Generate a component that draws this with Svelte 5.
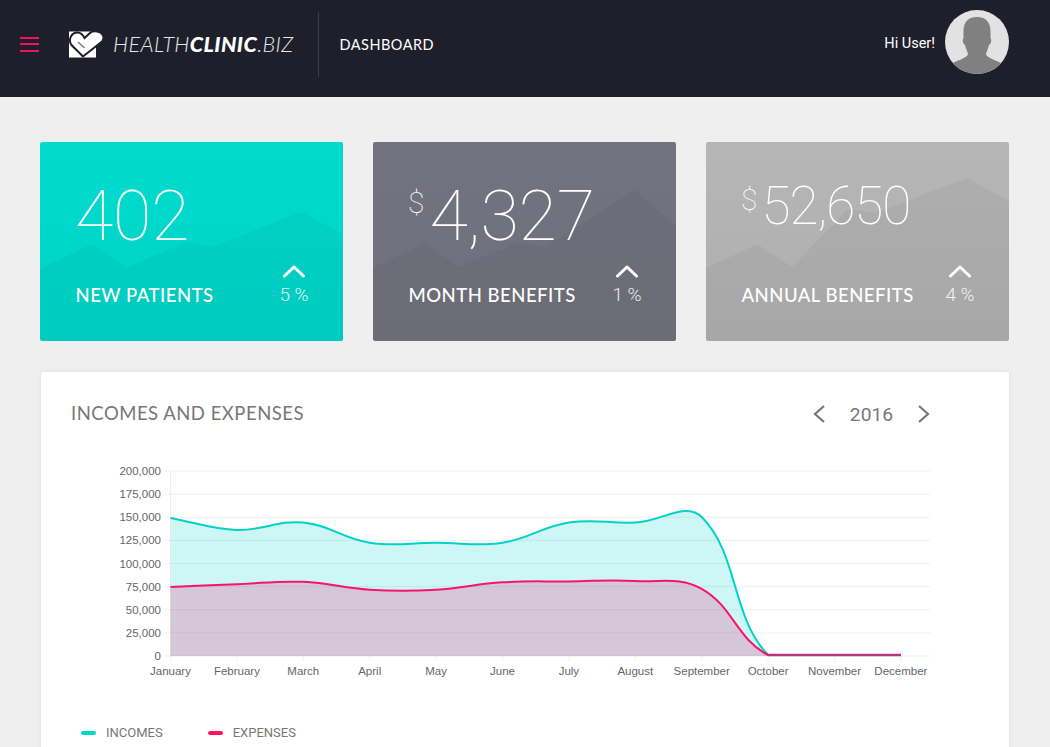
<script>
  const cards = [
    { cls: 'teal', prefix: '', value: '402', label: 'NEW PATIENTS', pct: '5', small: false,
      pts: '0,127 51,102 87,125 147,100 172,105 261,70 303,92 303,199 0,199' },
    { cls: 'slate', prefix: '$', value: '4,327', label: 'MONTH BENEFITS', pct: '1', small: false,
      pts: '0,126 52,101 86,125 145,100 172,105 262,48 303,84 303,199 0,199' },
    { cls: 'gray', prefix: '$', value: '52,650', label: 'ANNUAL BENEFITS', pct: '4', small: true,
      pts: '0,126 51,102 86,125 142,67 169,71 261,36 303,59 303,199 0,199' }
  ];

  const months = ['January','February','March','April','May','June','July','August','September','October','November','December'];
  const ticks = ['200,000','175,000','150,000','125,000','100,000','75,000','50,000','25,000','0'];
  const X0 = 89.5, STEP = 66.4, TOP = 13, BOTTOM = 198;
  const xs = months.map((_, i) => X0 + i * STEP);
  const rowH = (BOTTOM - TOP) / 8;

  const val = (v) => BOTTOM - 1 - (v / 200000) * (BOTTOM - TOP - 1);
  const incomes = [149000, 136000, 144000, 122000, 122000, 122000, 144000, 144000, 150000, 0, 0, 0];
  const expenses = [74000, 77000, 79500, 71000, 71000, 79000, 80000, 80500, 72000, 0, 0, 0];

  function spline(data) {
    const p = data.map((v, i) => [xs[i], val(v)]);
    const cap = (y) => Math.min(BOTTOM - 1, Math.max(TOP, y));
    let d = `M${p[0][0]} ${p[0][1]}`;
    const ctrl = (i) => {
      const a = p[Math.max(0, i - 1)], b = p[i], c = p[Math.min(p.length - 1, i + 1)];
      const d1 = Math.hypot(b[0] - a[0], b[1] - a[1]), d2 = Math.hypot(c[0] - b[0], c[1] - b[1]);
      const s = d1 + d2 || 1, t = 0.4;
      return {
        prev: [b[0] - (t * d1 / s) * (c[0] - a[0]), cap(b[1] - (t * d1 / s) * (c[1] - a[1]))],
        next: [b[0] + (t * d2 / s) * (c[0] - a[0]), cap(b[1] + (t * d2 / s) * (c[1] - a[1]))]
      };
    };
    for (let i = 1; i < p.length; i++) {
      const c1 = ctrl(i - 1).next, c2 = ctrl(i).prev;
      d += `C${c1[0]} ${c1[1]} ${c2[0]} ${c2[1]} ${p[i][0]} ${p[i][1]}`;
    }
    return d;
  }
  const lineA = spline(incomes);
  const lineB = spline(expenses);
  const close = `L${xs[11]} ${BOTTOM}L${xs[0]} ${BOTTOM}Z`;
</script>

<header class="topbar">
  <button class="burger" aria-label="Menu"><span></span><span></span><span></span></button>
  <div class="logo">
    <svg class="mark" viewBox="0 0 35 27" width="35" height="27" aria-hidden="true">
      <rect x="0" y="0.5" width="27" height="26" fill="#fff"/>
      <path d="M14 25.500L2.500 14C-1 9 2 1.500 8.500 1.500C11.500 1.500 13.500 3 15.500 7L21 2C24 -.5 29 0 32 2C35 4.500 35 8 33 10.500Z" fill="#fff" stroke="#1e1f2b" stroke-width="2"/>
      <path d="M9 11L15.500 17" fill="none" stroke="#777" stroke-width="1.400"/>
    </svg>
    <span class="brand">HEALTH<b>CLINIC</b>.BIZ</span>
  </div>
  <div class="divider"></div>
  <div class="page">DASHBOARD</div>
  <div class="user">
    <span>Hi User!</span>
    <svg class="avatar" viewBox="0 0 64 64" width="64" height="64" aria-hidden="true">
      <defs><clipPath id="disc"><circle cx="32" cy="32" r="32"/></clipPath></defs>
      <circle cx="32" cy="32" r="32" fill="#e2e2e2"/>
      <path clip-path="url(#disc)" fill="#808080" d="M32 7C22.500 7 18.500 13 18.500 21L18.500 28C17 30 18 34 20 35C21 39 22.500 42 23 44C22 48 13 50 7.500 53L7.500 70L56 70L56 53C51 50 42 48 41 44C41.500 42 43 39 44 35C46 34 47 30 45.500 28L45.500 21C45.500 13 41.500 7 32 7Z"/>
    </svg>
  </div>
</header>

<main class="content">
  <section class="cards">
    {#each cards as c}
      <article class="card {c.cls}">
        <svg class="hills" viewBox="0 0 303 199" width="303" height="199" aria-hidden="true">
          <polygon points={c.pts}/>
        </svg>
        <div class="figure" class:small={c.small}>
          {#if c.prefix}<span class="cur">{c.prefix}</span>{/if}<span class="num">{c.value}</span>
        </div>
        <div class="foot">
          <span class="label">{c.label}</span>
          <span class="trend">
            <svg viewBox="0 0 24 14" width="24" height="14" aria-hidden="true">
              <polyline points="2.500,12 12,3 21.500,12" fill="none" stroke="#fff" stroke-width="3" stroke-linecap="round" stroke-linejoin="round"/>
            </svg>
            <span class="pct">{c.pct} %</span>
          </span>
        </div>
      </article>
    {/each}
  </section>

  <section class="panel">
    <div class="panel-head">
      <h2>INCOMES AND EXPENSES</h2>
      <div class="year">
        <svg viewBox="0 0 14 20" width="14" height="20" aria-hidden="true"><polyline points="12,2 3,10 12,18" fill="none" stroke="#777" stroke-width="2.200"/></svg>
        <span>2016</span>
        <svg viewBox="0 0 14 20" width="14" height="20" aria-hidden="true"><polyline points="2,2 11,10 2,18" fill="none" stroke="#777" stroke-width="2.200"/></svg>
      </div>
    </div>

    <svg class="chart" viewBox="0 0 900 225" width="900" height="225" role="img" aria-label="Incomes and expenses chart">
      {#each ticks as t, i}
        <line class="grid" x1="84" x2="849" y1={TOP + i * rowH} y2={TOP + i * rowH}/>
        <text class="ylab" x="80" y={TOP + i * rowH + 4}>{t}</text>
      {/each}
      <line class="grid" x1={X0} x2={X0} y1={TOP} y2={BOTTOM + 5}/>
      {#each months as m, i}
        <line class="grid" x1={xs[i]} x2={xs[i]} y1={BOTTOM} y2={BOTTOM + 5}/>
        <text class="xlab" x={xs[i]} y={BOTTOM + 19}>{m}</text>
      {/each}
      <path d={lineA + close} fill="rgba(0,216,204,.2)"/>
      <path d={lineB + close} fill="rgba(249,12,100,.2)"/>
      <path d={lineA} fill="none" stroke="#00d2c8" stroke-width="2"/>
      <path d={lineB} fill="none" stroke="#f8146a" stroke-width="2"/>
      <line x1={xs[9]} x2={xs[11]} y1={BOTTOM - 1} y2={BOTTOM - 1} stroke="#b8357f" stroke-width="2.500"/>
    </svg>

    <div class="legend">
      <span class="key"><i class="sw a"></i>INCOMES</span>
      <span class="key"><i class="sw b"></i>EXPENSES</span>
    </div>
  </section>
</main>

<style>
  :global(html), :global(body) { margin: 0; height: 747px; overflow: hidden; background: #efefef; }

  .topbar {
    height: 97px; background: #1e1f2b; color: #fff; display: flex; align-items: center;
    font-family: Lato, "Open Sans", sans-serif; box-sizing: border-box; padding: 0 41px 9px 20px;
  }
  .burger { width: 19px; height: 15px; padding: 0; border: 0; background: none; display: flex; flex-direction: column; justify-content: space-between; }
  .burger span { display: block; height: 2px; background: #f0145f; }
  .logo { display: flex; align-items: center; gap: 9px; margin-left: 30px; }
  .mark { display: block; }
  .brand { font-size: 21.500px; font-style: italic; font-weight: 300; letter-spacing: .4px; color: #e8e8ea; }
  .brand b { font-weight: 900; color: #fff; }
  .divider { width: 1px; height: 65px; background: #3c3d48; margin-left: 25px; }
  .page { margin-left: 20px; font-size: 14.500px; letter-spacing: .5px; }
  .user { margin-left: auto; align-self: flex-start; margin-top: 10px; display: flex; align-items: flex-start; gap: 10px; font-size: 14.500px; font-family: Roboto, sans-serif; }
  .user span { margin-top: 24px; line-height: 20px; }
  .avatar { display: block; }

  .content { padding: 45px 41px 0 40px; }
  .cards { display: grid; grid-template-columns: repeat(3, 303px); gap: 30px; }
  .card { position: relative; height: 199px; border-radius: 2px; overflow: hidden; color: #fff; padding: 0 31px 0 36px; box-sizing: border-box; display: flex; flex-direction: column; }
  .teal { background: linear-gradient(#00dbcd, #00d3c7); }
  .slate { background: linear-gradient(#737380, #70707c); }
  .gray { background: linear-gradient(#b6b6b6, #aeaeae); }
  .hills { position: absolute; inset: 0; }
  .hills polygon { fill: rgba(0, 0, 0, .035); }

  .figure { position: relative; height: 98px; padding-top: 28px; box-sizing: border-box; font-family: Roboto, sans-serif; font-weight: 100; display: flex; align-items: flex-start; line-height: 92px; margin-left: -1px; }
  .num { font-size: 70px; line-height: 92px; letter-spacing: -.2px; }
  .cur { font-size: 30px; line-height: 66px; margin-right: 5px; }
  .figure.small { padding-top: 18px; }
  .figure.small .num { font-size: 53px; line-height: 92px; letter-spacing: -1px; }
  .figure.small .cur { line-height: 80px; margin-right: 4px; }

  .foot { position: relative; margin-top: 24px; display: flex; justify-content: space-between; align-items: flex-start; }
  .label { font-family: Lato, sans-serif; font-size: 18.500px; font-weight: 500; line-height: 22px; margin-top: 20px; margin-left: -.5px; letter-spacing: .5px; white-space: nowrap; }
  .trend { width: 36px; display: flex; flex-direction: column; align-items: center; gap: 7px; flex: none; }
  .trend svg { display: block; }
  .pct { font-family: Roboto, sans-serif; font-weight: 300; font-size: 19px; line-height: 20px; opacity: .85; white-space: nowrap; }

  .panel { margin: 31px 0 0 1px; height: 420px; background: #fff; border-radius: 2px; box-shadow: 0 0 4px rgba(0, 0, 0, .08); padding: 0 0 0 30px; box-sizing: border-box; }
  .panel-head { display: flex; justify-content: space-between; align-items: center; height: 82px; padding-right: 78px; box-sizing: border-box; }
  h2 { margin: 0; font-family: Lato, sans-serif; font-size: 18.500px; font-weight: 400; color: #777; letter-spacing: .5px; }
  .year { display: flex; align-items: center; gap: 24px; font-family: Roboto, sans-serif; font-size: 19.200px; color: #777; padding-top: 2px; }
  .year svg { display: block; }

  .chart { display: block; margin: 4px 0 0 10px; font-family: "Liberation Sans", Arial, sans-serif; font-size: 11.500px; }
  .grid { stroke: #efefef; stroke-width: 1; }
  .ylab { fill: #666; text-anchor: end; }
  .xlab { fill: #666; text-anchor: middle; }

  .legend { display: flex; gap: 45px; margin: 42px 0 0 10px; font-family: Roboto, sans-serif; font-size: 13px; color: #777; }
  .key { display: flex; align-items: center; }
  .sw { display: block; width: 15px; height: 4px; border-radius: 2px; margin-right: 10px; }
  .sw.a { background: #00d8cc; }
  .sw.b { background: #ff1464; }
</style>
